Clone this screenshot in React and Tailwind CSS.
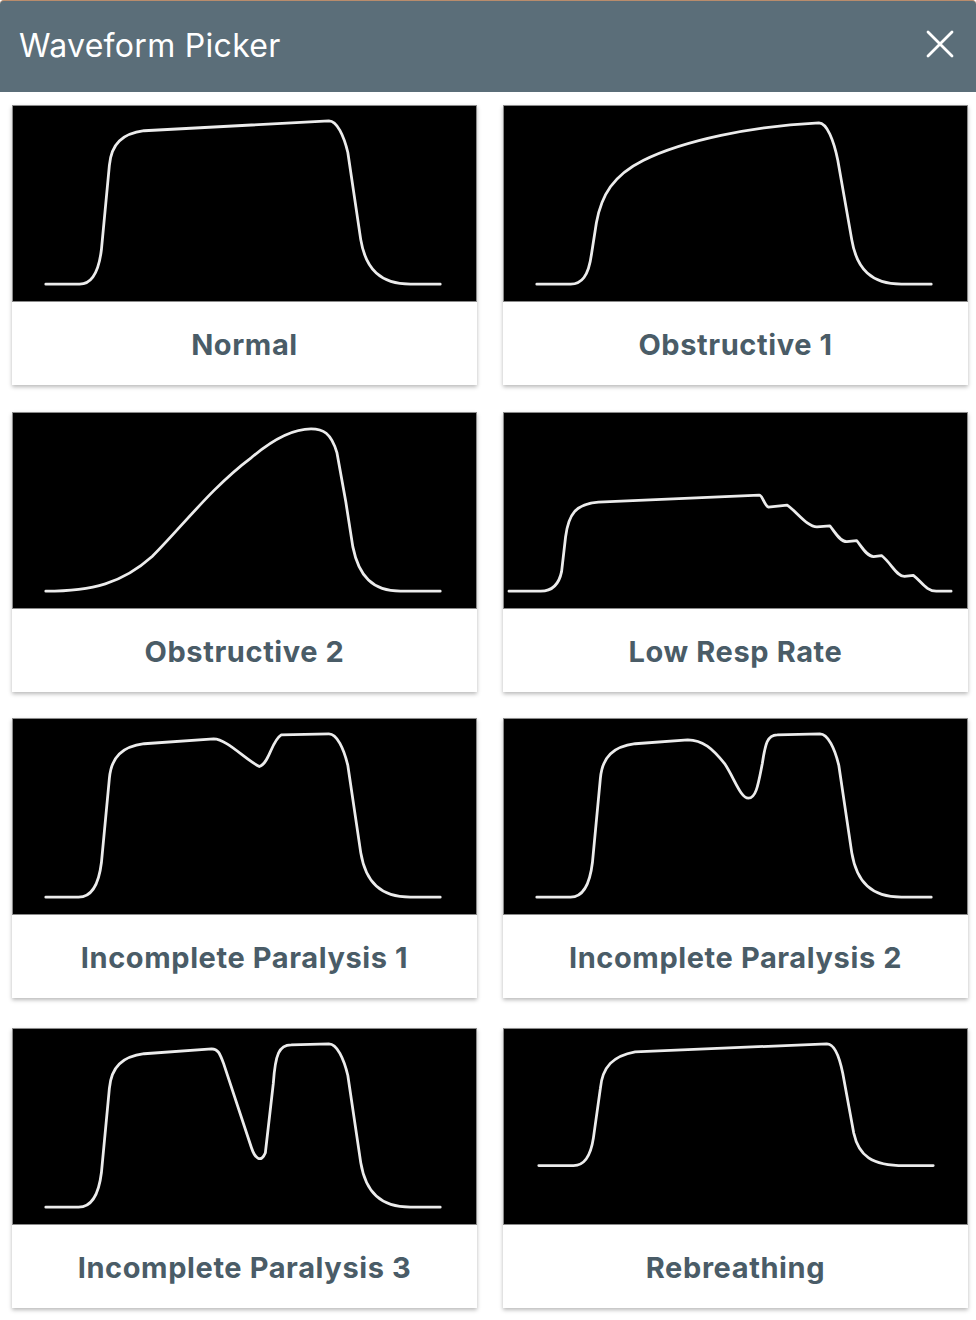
import React from 'react';

// traces drawn in the card's own pixel space (466 x 197)
const waveforms = [
  {
    name: 'Normal',
    d: 'M33 180 H67 C78 180 86 170 89 145 L97 60 C99 38 110 28 132 25 L318 15 C326 15 333 30 337 47 L350 135 C355 165 370 180 400 180 H430',
  },
  {
    name: 'Obstructive 1',
    d: 'M33 180 H67 C78 180 85 172 88 150 L93 118 C98 90 110 70 140 55 C180 35 250 20 317 17 C325 17 332 35 336 55 L350 135 C355 165 370 180 400 180 H430',
  },
  {
    name: 'Obstructive 2',
    d: 'M33 180 C80 180 110 172 140 145 C170 115 200 75 240 45 C260 28 280 16 300 16 C312 16 320 20 326 40 L335 90 L342 135 C348 165 362 180 390 180 H430',
  },
  {
    name: 'Low Resp Rate',
    d: 'M5 180 H37 C47 180 55 175 58 160 L62 125 C65 102 72 92 95 90 L257 83 C260 83 262 93 266 95 L285 93 C295 100 305 115 315 115 L328 114 C333 120 338 130 345 130 L355 129 C360 135 365 145 372 145 L380 144 C390 152 395 165 403 165 L412 164 C420 170 425 180 435 180 H450',
  },
  {
    name: 'Incomplete Paralysis 1',
    d: 'M33 180 H66 C78 180 86 170 89 145 L97 60 C99 38 110 28 132 25 L202 20 C215 20 235 42 248 48 C258 45 260 22 270 16 L318 15 C326 15 333 30 337 47 L350 135 C355 165 370 180 400 180 H430',
  },
  {
    name: 'Incomplete Paralysis 2',
    d: 'M33 180 H67 C78 180 86 170 89 145 L97 60 C99 38 110 28 132 25 L185 21 C200 21 210 30 222 45 C232 60 238 80 246 80 C254 80 256 65 260 45 C263 25 265 16 275 16 L318 15 C326 15 333 30 337 47 L350 135 C355 165 370 180 400 180 H430',
  },
  {
    name: 'Incomplete Paralysis 3',
    d: 'M33 180 H66 C78 180 86 170 89 145 L97 60 C99 38 110 28 132 25 L200 20 C206 20 208 24 212 35 L240 120 C244 132 250 135 254 125 L262 55 C264 25 268 16 280 16 L318 15 C326 15 333 30 337 47 L350 135 C355 165 370 180 400 180 H430',
  },
  {
    name: 'Rebreathing',
    d: 'M35 138 H70 C80 138 87 130 90 110 L97 60 C99 38 110 27 132 23 L325 15 C333 15 338 30 341 45 L352 105 C357 128 370 138 403 138 H432',
  },
];

function WaveCard({ name, d }) {
  return (
    <button className="flex flex-col bg-white text-left shadow-[0_2px_4px_rgba(0,0,0,0.28)]">
      <div className="h-[197px] w-full bg-black border border-[#8a8a8a]">
        <svg viewBox="0 0 466 197" width="100%" height="100%" preserveAspectRatio="none">
          <path d={d} fill="none" stroke="#ececec" strokeWidth="2.8" strokeLinejoin="round" strokeLinecap="round" />
        </svg>
      </div>
      <div className="h-[83px] w-full flex items-center justify-center pt-[2px]">
        <span className="text-[29px] font-bold text-[#4a5c67] tracking-[0.6px]">{name}</span>
      </div>
    </button>
  );
}

export default function App() {
  const rows = [waveforms.slice(0, 2), waveforms.slice(2, 4), waveforms.slice(4, 6), waveforms.slice(6, 8)];
  const rowGap = ['mt-[13px]', 'mt-[27px]', 'mt-[26px]', 'mt-[30px]'];

  return (
    <div className="w-[976px] min-h-[1320px] bg-white" style={{ fontFamily: 'Inter, "Noto Sans", sans-serif' }}>
      <div className="h-[92px] bg-[#5b6e79] border-t border-[#b98c6c] rounded-t-[4px] flex items-center justify-between pl-[19px] pr-[22px]">
        <h1 className="text-[32px] font-normal text-white tracking-[0.3px] pb-[1px]">Waveform Picker</h1>
        <svg width="28" height="28" viewBox="0 0 28 28" className="mb-[6px]">
          <path d="M2 2 L26 26 M26 2 L2 26" stroke="white" strokeWidth="2.8" strokeLinecap="round" />
        </svg>
      </div>

      <div className="pl-[12px] pr-[8px]">
        {rows.map((row, i) => (
          <div key={i} className={`grid grid-cols-2 gap-x-[26px] ${rowGap[i]}`}>
            {row.map(w => (
              <WaveCard key={w.name} name={w.name} d={w.d} />
            ))}
          </div>
        ))}
      </div>
    </div>
  );
}
